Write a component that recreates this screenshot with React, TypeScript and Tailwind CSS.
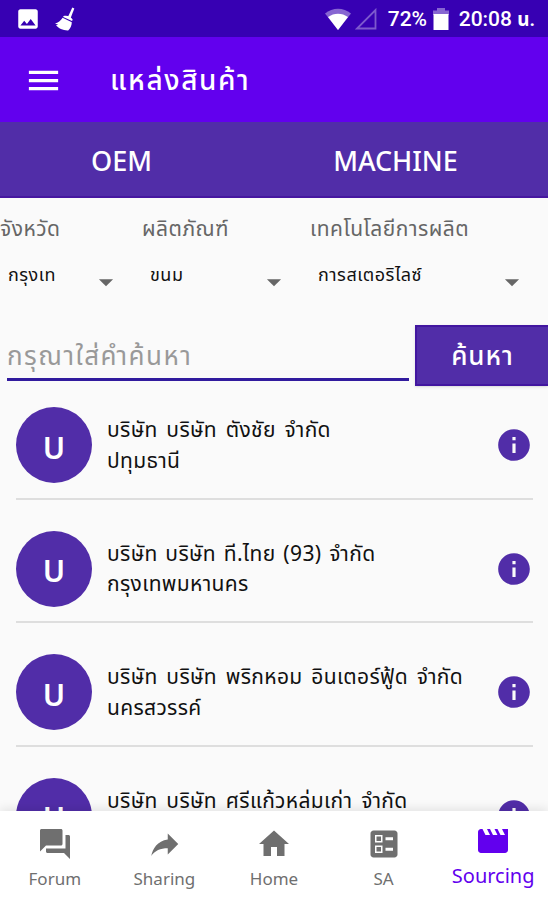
import { MdArrowDropDown, MdBallot, MdForum, MdHome, MdImage, MdInfo, MdMenu, MdMovie } from "react-icons/md";

const companies = [
  { name: "บริษัท บริษัท ตังชัย จำกัด", province: "ปทุมธานี", spacing: "[word-spacing:3px]" },
  { name: "บริษัท บริษัท ที.ไทย (93) จำกัด", province: "กรุงเทพมหานคร", spacing: "[word-spacing:2px]" },
  { name: "บริษัท บริษัท พริกหอม อินเตอร์ฟู้ด จำกัด", province: "นครสวรรค์", spacing: "[word-spacing:3px]" },
  { name: "บริษัท บริษัท ศรีแก้วหล่มเก่า จำกัด", province: "", spacing: "[word-spacing:3px]" },
];

const filters = [
  { label: "จังหวัด", value: "กรุงเท", width: "w-[142px]" },
  { label: "ผลิตภัณฑ์", value: "ขนม", width: "w-[168px]" },
  { label: "เทคโนโลยีการผลิต", value: "การสเตอริไลซ์", width: "w-[238px]" },
];

function ShareArrow() {
  return (
    <svg viewBox="0 0 24 24" className="h-9 w-9" fill="currentColor">
      <path d="M14.500 9V5l7 7-7 7v-4.100c-5 0-8.500 1.600-11 5.100 1-5 4-10 11-11z" />
    </svg>
  );
}

const navItems = [
  { label: "Forum", icon: <MdForum className="h-9 w-9" /> },
  { label: "Sharing", icon: <ShareArrow /> },
  { label: "Home", icon: <MdHome className="h-9 w-9" /> },
  { label: "SA", icon: <MdBallot className="h-9 w-9" /> },
];

function StatusBar() {
  return (
    <div className="flex h-[37px] shrink-0 items-center bg-[#3700b3] pl-[15px] pr-[13px] text-white">
      <MdImage className="h-[26px] w-[26px]" />
      <svg viewBox="0 0 20 24" className="ml-[14px] h-6 w-5" fill="currentColor">
        <path d="M17.300.5l2 1-3.800 10-2.700-1.200z" />
        <path d="M8.500 9c3.500-1.200 8 .7 9.200 3.700l-.7 1.400-8.800-4.200z" />
        <path d="M7.600 10.800l9.200 4.400c0 3.200-1.300 6-3.600 8.200-5 .2-9.700-2-12.200-5.100l2.200-.5L0 16.600c3-.8 5.800-2.800 7.600-5.800z" />
      </svg>
      <svg viewBox="0 0 26 22" className="ml-auto h-[22px] w-[26px]" fill="currentColor">
        <path d="M0 5.500C7.500-1 18.500-1 26 5.500L13 22z" opacity=".4" />
        <path d="M3 9C9 4.500 17 4.500 23 9L13 22z" />
      </svg>
      <svg viewBox="0 0 22 22" className="ml-1 h-[22px] w-[22px]" fill="none" stroke="currentColor" strokeWidth="1.800" opacity=".35">
        <path d="M20.500 2v18.500H2z" />
      </svg>
      <span className="ml-[11px] mt-[2px] w-[41px] whitespace-nowrap font-[Roboto] text-[21px] font-medium">72%</span>
      <svg viewBox="0 0 16 24" className="ml-[4px] h-6 w-4" fill="currentColor">
        <path d="M4 1h8v2.500h4V8H0V3.500h4z" opacity=".4" />
        <path d="M.5 7h15v16H.5z" />
      </svg>
      <span className="ml-[10px] mt-[2px] whitespace-nowrap font-[Roboto,'Noto_Sans_Thai'] text-[21px] font-medium">
        20:08 <span className="text-[19px] font-bold">น.</span>
      </span>
    </div>
  );
}

export default function App() {
  return (
    <div className="flex h-[900px] w-[548px] flex-col overflow-hidden bg-[#fafafa] font-['Noto_Sans_Thai',Kanit,'Noto_Sans',sans-serif] text-[#111]">
      <StatusBar />

      {/* App bar */}
      <header className="flex h-[85px] shrink-0 items-center bg-[#6200ee] pl-6 pt-px text-white">
        <MdMenu className="h-[39px] w-[39px]" />
        <h1 className="ml-[47px] whitespace-nowrap pt-1 text-[28px] font-medium tracking-[1.6px]">แหล่งสินค้า</h1>
      </header>

      {/* Tabs */}
      <div className="grid h-[76px] shrink-0 grid-cols-[243px_1fr] items-center border-b-2 border-[#4617a0] bg-[#512da8] pt-[8px] text-center text-[27px] font-medium text-white">
        <span>OEM</span>
        <span>MACHINE</span>
      </div>

      {/* Filters */}
      <div className="flex h-[127px] shrink-0 pt-[17px]">
        {filters.map((filter) => (
          <div key={filter.label} className={filter.width}>
            <div className="h-[30px] whitespace-nowrap text-[21px] leading-[30px] tracking-[0.5px] text-[#666]">{filter.label}</div>
            <div className="mt-[15px] flex h-8 items-center justify-between pl-2 pr-[19px]">
              <span className="whitespace-nowrap text-[18px] leading-8 tracking-[0.5px]">{filter.value}</span>
              <MdArrowDropDown className="mt-[12px] h-[34px] w-[34px] shrink-0 text-[#666]" />
            </div>
          </div>
        ))}
      </div>

      {/* Search */}
      <div className="flex h-[61px] shrink-0">
        <div className="ml-[7px] flex h-[56px] w-[402px] items-center border-b-[3px] border-[#311b9e] pt-[12px] text-[26px] tracking-[1.5px] text-[#999]">
          <span className="whitespace-nowrap">กรุณาใส่คำค้นหา</span>
        </div>
        <button className="ml-[6px] flex-1 border-2 border-r-0 border-[#4216a0] bg-[#512da8] pt-[4px] text-[26px] font-medium tracking-[1px] text-white shadow-sm">
          ค้นหา
        </button>
      </div>

      {/* Company list */}
      <div className="min-h-0 flex-1 overflow-hidden pl-[16px] pr-[15px]">
        {companies.map((company) => (
          <div key={company.name} className="flex h-[123.5px] items-start border-b-2 border-[#dedede] pt-[31px] first:h-[113.5px] first:pt-[21px]">
            <div className="flex h-[76px] w-[76px] shrink-0 items-center justify-center rounded-full bg-[#512da8] pt-[9px] text-[30px] font-semibold leading-none text-white">
              U
            </div>
            <div className="ml-[15px] mt-[9px] flex-1 whitespace-nowrap text-[21px] leading-[30.5px] tracking-[0.35px]">
              <div className={company.spacing}>{company.name}</div>
              <div>{company.province}</div>
            </div>
            <MdInfo className="mt-[19px] h-[38px] w-[38px] shrink-0 text-[#512da8]" />
          </div>
        ))}
      </div>

      {/* Bottom navigation */}
      <nav className="z-10 grid h-[89px] shrink-0 grid-cols-5 bg-white text-[#6f6f6f] shadow-[0_-2px_10px_rgba(0,0,0,0.1)]">
        {navItems.map((item) => (
          <div key={item.label} className="flex flex-col items-center pt-[15px]">
            {item.icon}
            <span className="mt-[4px] text-[17px] leading-7">{item.label}</span>
          </div>
        ))}
        <div className="flex flex-col items-center pt-[12px] text-[#6200ee]">
          <MdMovie className="h-9 w-9" />
          <span className="mt-[4px] text-[20px] leading-7">Sourcing</span>
        </div>
      </nav>
    </div>
  );
}
